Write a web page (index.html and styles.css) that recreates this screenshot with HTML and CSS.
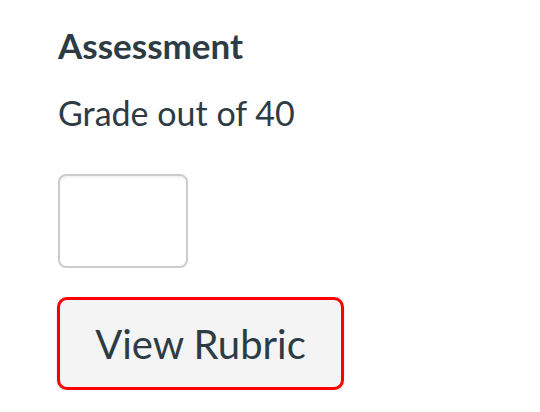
FILE: index.html
```html
<!DOCTYPE html>
<html>
<head>
<meta charset="utf-8">
<link rel="stylesheet" href="styles.css">
</head>
<body>
<div class="panel">
  <h2 class="title">Assessment</h2>
  <div class="label">Grade out of 40</div>
  <input class="grade" type="text">
  <button class="rubric">View Rubric</button>
</div>
</body>
</html>
```
FILE: styles.css
```css
html, body {
  margin: 0;
  padding: 0;
  background: #fff;
}
.panel {
  display: flex;
  flex-direction: column;
  align-items: flex-start;
  padding: 24px 0 0 58px;
  font-family: Lato, "Open Sans", sans-serif;
  color: #2d3b45;
}
.title {
  margin: 0;
  font-size: 35px;
  font-weight: 700;
  line-height: 42px;
}
.label {
  margin-top: 26px;
  font-size: 34px;
  line-height: 41px;
}
.grade {
  margin-top: 41px;
  box-sizing: border-box;
  width: 130px;
  height: 94px;
  border: 2px solid #cccccc;
  border-radius: 8px;
  background: #fff;
  box-shadow: inset 0 2px 2px rgba(0,0,0,0.05);
}
.rubric {
  margin-top: 29px;
  margin-left: -1px;
  box-sizing: border-box;
  width: 287px;
  height: 93px;
  padding: 0;
  border: 3px solid #f00;
  border-radius: 10px;
  background: #f4f4f4;
  font-family: Lato, sans-serif;
  font-size: 40px;
  line-height: 48px;
  color: #2d3b45;
  box-shadow: 0 1px 2px rgba(0,0,0,0.2);
}
```
